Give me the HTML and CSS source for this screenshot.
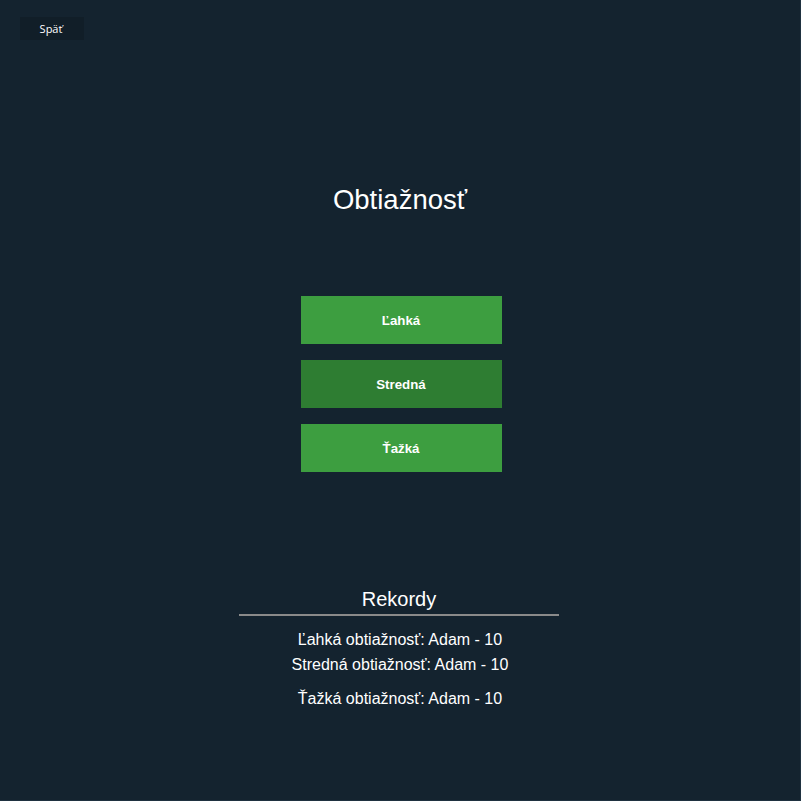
FILE: index.html
```html
<!DOCTYPE html>
<html lang="sk">
<head>
<meta charset="utf-8">
<title>Obtiažnosť</title>
<link rel="stylesheet" href="styles.css">
</head>
<body>
<div class="app">
  <div class="topbar">
    <button class="back">Späť</button>
  </div>
  <h1 class="title">Obtiažnosť</h1>
  <div class="levels">
    <button class="level">Ľahká</button>
    <button class="level level-active">Stredná</button>
    <button class="level">Ťažká</button>
  </div>
  <section class="records">
    <h2 class="records-title">Rekordy</h2>
    <p class="record">Ľahká obtiažnosť: Adam - 10</p>
    <p class="record">Stredná obtiažnosť: Adam - 10</p>
    <p class="record record-last">Ťažká obtiažnosť: Adam - 10</p>
  </section>
</div>
</body>
</html>
```
FILE: styles.css
```css
html, body {
  margin: 0;
  padding: 0;
  background: #14232f;
}
.app {
  width: 800px;
  height: 800px;
  background: #14232f;
  display: flex;
  flex-direction: column;
  align-items: center;
  font-family: "Liberation Sans", Arial, sans-serif;
  color: #ffffff;
  border-right: 1px solid #1f3140;
  border-bottom: 1px solid #1f3140;
}
.topbar {
  align-self: stretch;
  padding: 17px 0 0 20px;
}
.back {
  width: 64px;
  height: 23px;
  background: #111e28;
  border: none;
  color: #ffffff;
  font-family: "Open Sans", "DejaVu Sans", sans-serif;
  font-size: 11px;
  padding: 0 2px 0 0;
  text-align: center;
}
.title {
  margin: 144px 0 0 0;
  font-size: 27.5px;
  font-weight: normal;
  line-height: 32px;
}
.levels {
  margin-top: 80px;
  margin-left: 2px;
  display: flex;
  flex-direction: column;
  gap: 16px;
}
.level {
  width: 201px;
  height: 48px;
  border: none;
  background: #3d9e40;
  color: #ffffff;
  font-family: "Liberation Sans", Arial, sans-serif;
  font-weight: bold;
  font-size: 13.3px;
  padding: 0;
}
.level-active {
  background: #2e7d32;
}
.records {
  margin-top: 115px;
  display: flex;
  flex-direction: column;
  align-items: center;
}
.records-title {
  width: 320px;
  margin: 0 2px 0 0;
  font-size: 20px;
  font-weight: normal;
  line-height: 24px;
  text-align: center;
  padding-bottom: 3px;
  border-bottom: 2px solid #8a8a8a;
}
.record {
  margin: 0;
  font-size: 16px;
  line-height: 25px;
}
.record:first-of-type {
  margin-top: 11px;
}
.record-last {
  margin-top: 9px;
}
```
